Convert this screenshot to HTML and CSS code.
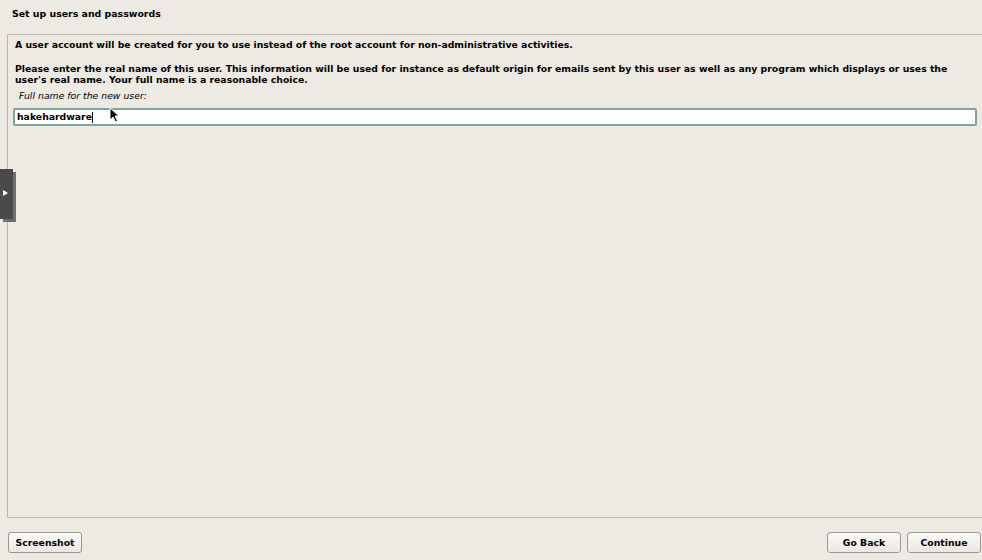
FILE: index.html
```html
<!DOCTYPE html>
<html lang="en">
<head>
    <meta charset="UTF-8">
    <title>Set up users and passwords</title>
    <link rel="stylesheet" href="styles.css">
</head>
<body>
    <div class="installer">
        <h1 class="title">Set up users and passwords</h1>

        <div class="panel">
            <p class="para">A user account will be created for you to use instead of the root account for non-administrative activities.</p>
            <p class="para">Please enter the real name of this user. This information will be used for instance as default origin for emails sent by this user as well as any program which displays or uses the user's real name. Your full name is a reasonable choice.</p>
            <label class="field-label" for="fullname">Full name for the new user:</label>
            <div class="entry">
                <span id="fullname" class="entry-text">hakehardware</span><span class="caret"></span>
            </div>
        </div>

        <div class="footer">
            <button class="button">Screenshot</button>
            <div class="nav">
                <button class="button">Go Back</button>
                <button class="button">Continue</button>
            </div>
        </div>
    </div>

    <!-- side expander tab -->
    <div class="side-tab"><span class="side-arrow"></span></div>

    <!-- mouse pointer -->
    <svg class="pointer" width="12" height="18" viewBox="0 0 12 18">
        <path d="M1 1 L1 13 L4 10 L6.5 15 L8.5 14 L6 9 L10 9 Z" fill="#000" stroke="#fff" stroke-width="1"/>
    </svg>
</body>
</html>
```

FILE: styles.css
```css
body {
    margin: 0;
    background-color: #edeae4;
    font-family: "DejaVu Sans", sans-serif;
    color: #000;
    overflow: hidden;
}
.installer {
    display: flex;
    flex-direction: column;
    height: 560px;
}
.title {
    font-size: 9.4px;
    font-weight: bold;
    margin: 0;
    padding: 8px 0 0 12px;
    height: 34px;
    box-sizing: border-box;
}
.panel {
    margin-left: 7px;
    height: 484px;
    box-sizing: border-box;
    border: 1px solid #bcb5a9;
    border-right: none;
    padding: 4px 5px 0 7px;
}
.para {
    font-size: 9.3px;
    font-weight: bold;
    line-height: 11px;
    margin: 0 0 13px 0;
}
.para + .para {
    margin-bottom: 5px;
}
.field-label {
    display: block;
    font-size: 9.3px;
    font-style: italic;
    margin: 0 0 7px 4px;
}
.entry {
    height: 18px;
    margin-left: -2px;
    box-sizing: border-box;
    border: 2px solid #80a59c;
    border-radius: 2px;
    background: #fff;
    padding: 1px 2px;
    font-size: 9.3px;
    font-weight: bold;
    line-height: 12px;
    display: flex;
    align-items: center;
}
.caret {
    display: inline-block;
    width: 1px;
    height: 11px;
    background: #000;
}
.footer {
    display: flex;
    justify-content: space-between;
    padding: 14px 1px 0 8px;
}
.nav {
    display: flex;
    gap: 6px;
}
.button {
    width: 74px;
    height: 21px;
    font-family: "DejaVu Sans", sans-serif;
    font-size: 9.3px;
    font-weight: bold;
    color: #000;
    border: 1px solid #9a958d;
    border-radius: 3px;
    background: linear-gradient(#fbfaf8, #ebe8e3);
    padding: 0;
}
.side-tab {
    position: absolute;
    left: 0;
    top: 169px;
    width: 13px;
    height: 50px;
    background: #4a4a4a;
    box-shadow: 3px 3px 0 #6f6f6f;
}
.side-arrow {
    position: absolute;
    left: 3px;
    top: 21px;
    border-left: 5px solid #fff;
    border-top: 3px solid transparent;
    border-bottom: 3px solid transparent;
}
.pointer {
    position: absolute;
    left: 109px;
    top: 107px;
}
```
